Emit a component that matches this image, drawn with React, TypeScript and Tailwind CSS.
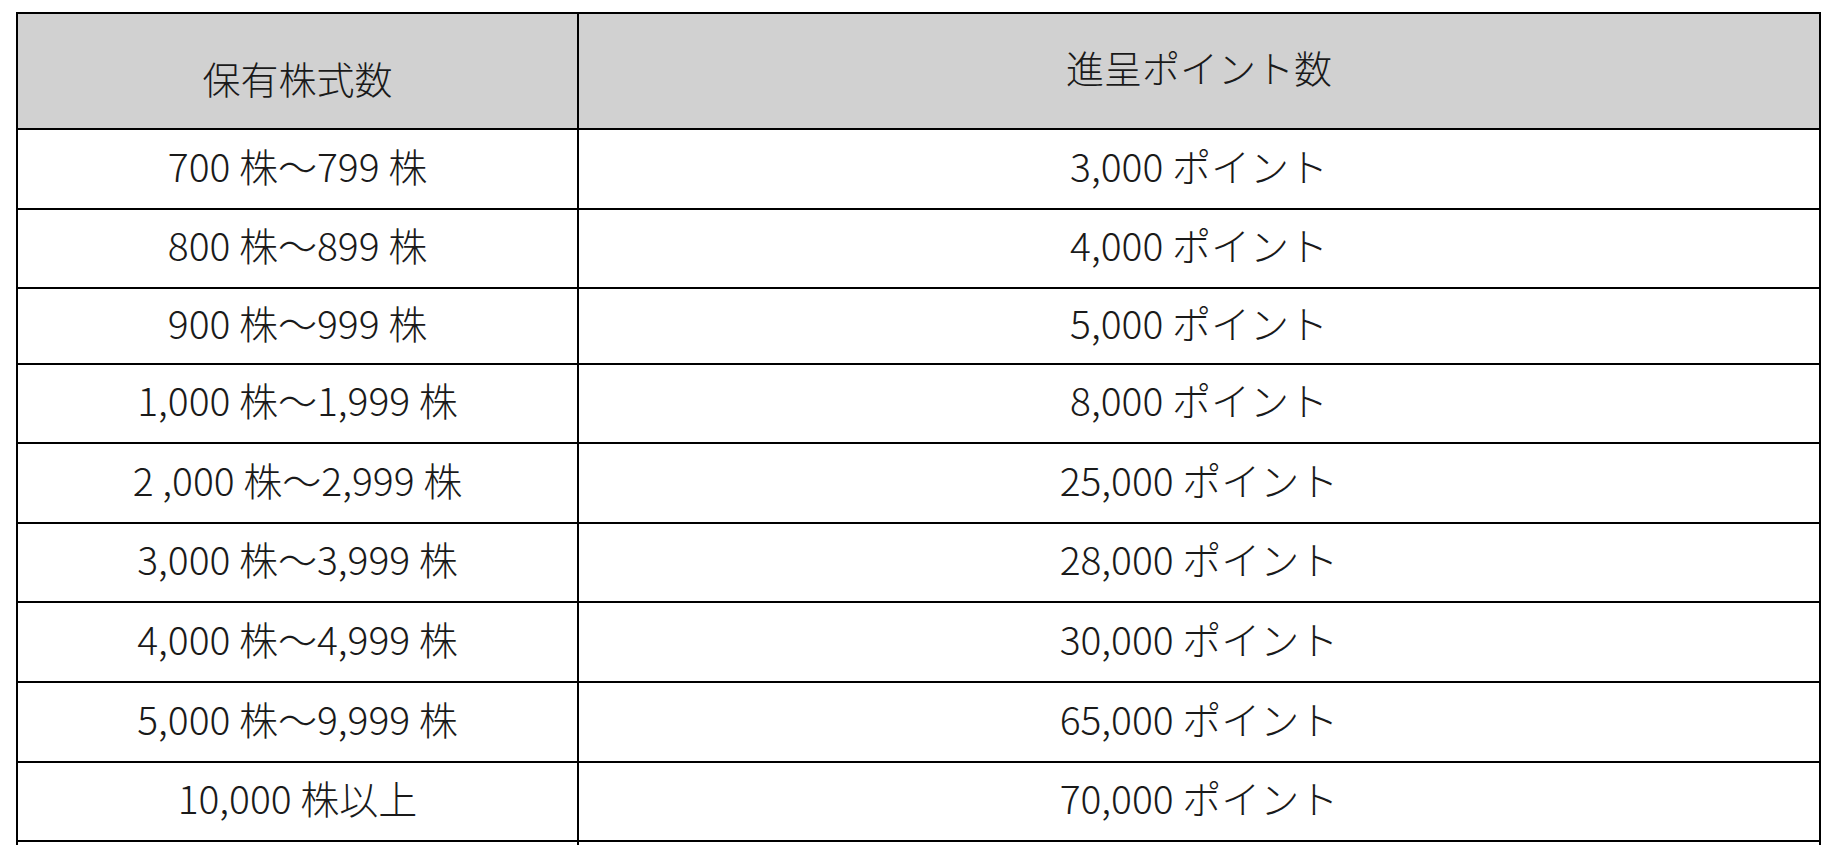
import React from "react";

const rows: { left: string; right: string; h: string }[] = [
  { left: "700 株～799 株", right: "3,000 ポイント", h: "h-[80px]" },
  { left: "800 株～899 株", right: "4,000 ポイント", h: "h-[79px]" },
  { left: "900 株～999 株", right: "5,000 ポイント", h: "h-[76px]" },
  { left: "1,000 株～1,999 株", right: "8,000 ポイント", h: "h-[79px]" },
  { left: "2 ,000 株～2,999 株", right: "25,000 ポイント", h: "h-[80px]" },
  { left: "3,000 株～3,999 株", right: "28,000 ポイント", h: "h-[79px]" },
  { left: "4,000 株～4,999 株", right: "30,000 ポイント", h: "h-[80px]" },
  { left: "5,000 株～9,999 株", right: "65,000 ポイント", h: "h-[80px]" },
  { left: "10,000 株以上", right: "70,000 ポイント", h: "h-[79px]" },
];

export default function App() {
  return (
    <div
      className="w-[1844px] h-[856px] bg-white overflow-hidden text-[#1a1a1a] font-light"
      style={{ fontFamily: '"Noto Sans CJK JP", "Noto Sans", sans-serif' }}
    >
      <div className="ml-[16px] mt-[12px] w-[1805px] border-l-2 border-t-2 border-black">
        <div className="flex h-[116px] bg-[#d1d1d1]">
          <div className="w-[561px] border-r-2 border-b-2 border-black flex items-center justify-center pt-[14px] text-[38px] leading-none">
            保有株式数
          </div>
          <div className="w-[1242px] border-r-2 border-b-2 border-black flex items-center justify-center pb-[8px] text-[38px] leading-none">
            進呈ポイント数
          </div>
        </div>
        {rows.map((r, i) => (
          <div key={i} className={`flex ${r.h}`}>
            <div className="w-[561px] border-r-2 border-b-2 border-black flex items-center justify-center pb-[8px] text-[39px] leading-none whitespace-pre">
              {r.left}
            </div>
            <div className="w-[1242px] border-r-2 border-b-2 border-black flex items-center justify-center pb-[8px] text-[39px] leading-none whitespace-pre">
              {r.right}
            </div>
          </div>
        ))}
        <div className="flex h-[3px]">
          <div className="w-[561px] border-r-2 border-black" />
          <div className="w-[1242px] border-r-2 border-black" />
        </div>
      </div>
    </div>
  );
}
